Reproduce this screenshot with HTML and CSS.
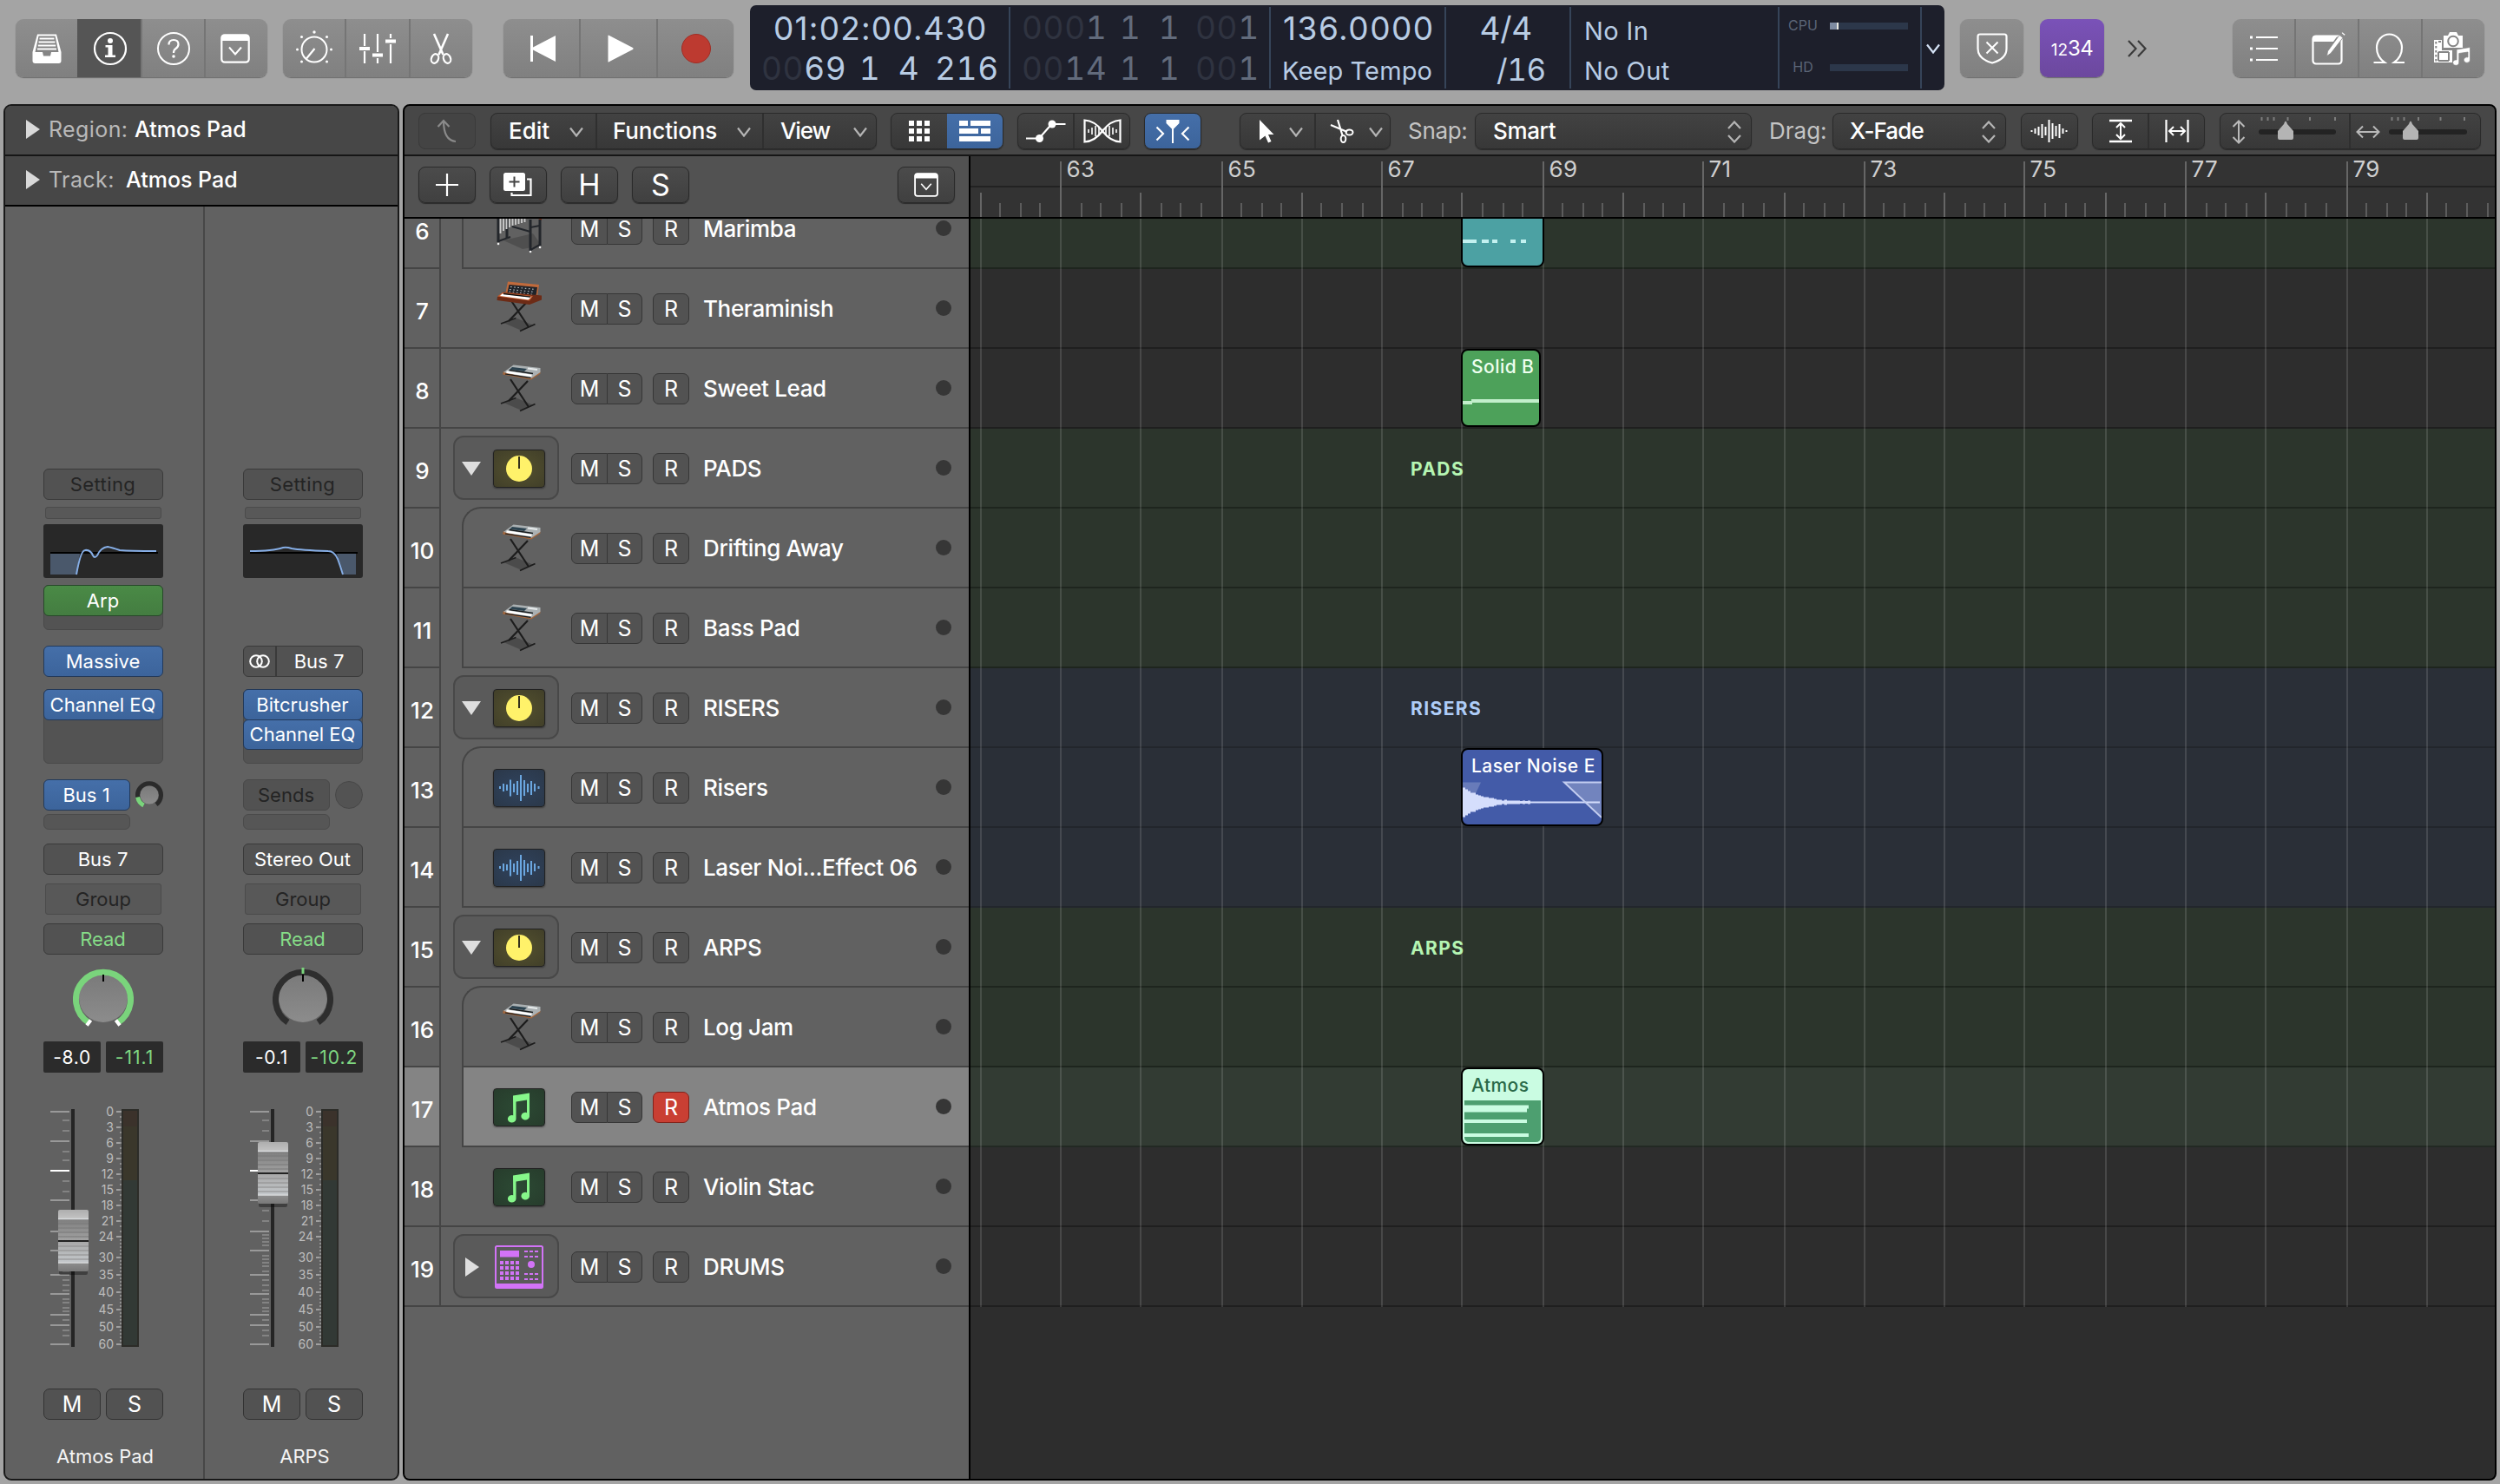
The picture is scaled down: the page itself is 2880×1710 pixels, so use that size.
FILE: index.html
```html
<!DOCTYPE html>
<html lang="en">
<head>
<meta charset="utf-8">
<title>Tracks</title>
<link rel="stylesheet" href="styles.css">
</head>
<body>
<svg width="0" height="0" class="defs" aria-hidden="true">
  <symbol id="chev" viewBox="0 0 16 12"><path d="M1 1.5 8 10.5 15 1.5" fill="none" stroke="currentColor" stroke-width="2.2"/></symbol>
  <symbol id="updown" viewBox="0 0 18 26"><path d="M2 9 9 1.500 16 9M2 17 9 24.500 16 17" fill="none" stroke="currentColor" stroke-width="2.200"/></symbol>
  <symbol id="window" viewBox="0 0 34 34"><rect x="1.300" y="1.300" width="31.400" height="31.400" rx="3.500" fill="none" stroke="currentColor" stroke-width="2.200"/><path d="M1 8V4Q1 1 4 1H30Q33 1 33 4V8Z" fill="currentColor"/><path d="M10 15.500 17 23.500 24 15.500" fill="none" stroke="currentColor" stroke-width="2"/></symbol>
  <symbol id="stereo" viewBox="0 0 24 16"><circle cx="8" cy="8" r="6.800" fill="none" stroke="currentColor" stroke-width="2"/><circle cx="16" cy="8" r="6.800" fill="none" stroke="currentColor" stroke-width="2"/></symbol>
  <linearGradient id="knobface" x1="0" y1="0" x2="0" y2="1"><stop offset="0" stop-color="#7a7a7a"/><stop offset="1" stop-color="#8c8c8c"/></linearGradient>
  <symbol id="marimba" viewBox="0 0 60 92">
    <path d="M12 60 46 52 56 66 34 70Z" fill="#000" opacity=".18"/>
    <path d="M4 20 50 34 56 37 56 30 4 18Z" fill="#7a3420"/>
    <path d="M6 30V62M16 35V57M43 36V72M54 36V66" stroke="#23262b" stroke-width="3"/>
    <path d="M6 61 20 56M43 45 54 43M43 71 54 65M22 44 43 50" stroke="#23262b" stroke-width="2"/>
    <path d="M8.500 30V52M12 30V49M15.500 30V47M19 31V45M22.500 31V43M26 32V42M29.500 32V41M33 33V40M36.500 33V39" stroke="#c9c9c9" stroke-width="1.900"/>
    <path d="M6 64h.1M43 73h.1M54 68h.1" stroke="#eee" stroke-width="2.500" stroke-linecap="round"/>
  </symbol>
  <symbol id="stand" viewBox="0 0 60 92">
    <path d="M12 63 28 58 47 66 33 72Z" fill="#000" opacity=".22"/>
    <path d="M20 36 41 68M40 38 18 61" stroke="#1c1c1c" stroke-width="2.200"/>
    <path d="M9 64 26.500 57.500M31 72.500 48.500 64.500" stroke="#1c1c1c" stroke-width="1.800"/>
  </symbol>
  <symbol id="modular" viewBox="0 0 60 92">
    <use href="#stand" width="60" height="92"/>
    <path d="M17 15.500 53 19 51 32.500 14.500 28Z" fill="#c06a3c"/>
    <path d="M18.500 19 51 22 49.500 32 16.500 28Z" fill="#20242a"/>
    <path d="M20 21.500 49 24.500M19 24.500 48 27.500M18.500 27 47 30.500" stroke="#b9c0c4" stroke-width="1.100" stroke-dasharray="1.600 2.600"/>
    <path d="M5 33 12 27.500 56 31.500 56 36.500 42 42 4.500 37Z" fill="#6d2b16"/>
    <path d="M5 32.500 11 28 46 32 42 37.500Z" fill="#c45f31"/>
    <path d="M10.500 29.500 44 33.500 40.500 36.500 8 32Z" fill="#fff"/>
    <path d="M12 29.500 43 33.200" stroke="#111" stroke-width="1.300"/>
  </symbol>
  <symbol id="synth" viewBox="0 0 60 92">
    <use href="#stand" width="60" height="92"/>
    <path d="M12 27 44 33 54 25 54.500 29.500 44 36.500 11 30.500Z" fill="#a4653a"/>
    <path d="M23.500 19.500 54.500 23 54.500 28 44 35 12 28Z" fill="#aab0b2"/>
    <path d="M22 22 39 24 36 27 19 24.800Z" fill="#2c4350"/>
    <path d="M40 23.500 51 25" stroke="#e8eced" stroke-width="2"/>
    <path d="M18.500 25.500 46 29.500" stroke="#16191b" stroke-width="1.500"/>
    <path d="M15.500 27.600 44.500 32" stroke="#fff" stroke-width="2.600"/>
    <path d="M14 30 43.500 34.400" stroke="#15181a" stroke-width="1.200"/>
  </symbol>
  <symbol id="bus" viewBox="0 0 60 44">
    <circle cx="30" cy="22" r="15" fill="#fff26a"/><path d="M30 8V22" stroke="#33301a" stroke-width="2"/>
  </symbol>
  <symbol id="audio" viewBox="0 0 60 44">
    <path d="M8 20v3M12 17v9M16 18v7M20 12.500v19M24 17v10M28 14v16M32 7v30M36 13v18M40 17v10M44 14v16M48 17v9M52.500 20v3" stroke="#6ba7e0" stroke-width="2"/>
  </symbol>
  <symbol id="notes" viewBox="0 0 60 44">
    <path d="M23 8.500 42 5.500V32.500a4.800 4.300 0 1 1-3-4.300V13.500L26.500 15.500V35.500a4.800 4.300 0 1 1-3.300-4.300Z" fill="#86f78a"/>
  </symbol>
  <symbol id="drums" viewBox="0 0 56 50">
    <rect x="1" y="1" width="54" height="48" rx="1.500" fill="none" stroke="#d273f7" stroke-width="2"/>
    <path d="M1 44H55V48.500H1ZM6 6H28V13.500H6Z" fill="#d273f7"/>
    <path d="M6 20H28M6 26H28M6 32H28M6 38H28" stroke="#d273f7" stroke-width="4" stroke-dasharray="4 2"/>
    <path d="M34 7H50M34 13H50M34 33H50M34 39H50" stroke="#d273f7" stroke-width="2" stroke-dasharray="4 2"/>
    <circle cx="42" cy="22" r="4" fill="#d273f7"/>
  </symbol>
</svg>

<header class="topbar">
  <div class="tgroup g4">
    <button class="tb"><svg width="36" height="36" viewBox="0 0 36 36"><path d="M7 1.500H29L34.500 22V32Q34.500 35 31.500 35H4.500Q1.500 35 1.500 32V22Z" fill="#fff"/><path d="M8.500 3.500H27.500L31.500 22H23L22 26.500H14L13 22H4.500Z" fill="#858585"/><path d="M9.500 6.500H26.500M8.500 10.500H27.500M7.800 14.500H28.200M7 18.500H29" stroke="#fff" stroke-width="2.200"/></svg></button>
    <button class="tb on"><svg width="40" height="40" viewBox="0 0 40 40"><circle cx="20" cy="20" r="18" fill="none" stroke="#fff" stroke-width="2.200"/><circle cx="20" cy="11" r="3" fill="#fff"/><path d="M14.500 16H22.500V27.500H26V30H14V27.500H17.500V18.500H14.500Z" fill="#fff"/></svg></button>
    <button class="tb"><svg width="40" height="40" viewBox="0 0 40 40"><circle cx="20" cy="20" r="18" fill="none" stroke="#fff" stroke-width="2"/><path d="M14.500 15.500Q14.500 10 20 10T25.500 15Q25.500 18 22.500 20Q20 21.500 20 25" fill="none" stroke="#fff" stroke-width="2.200"/><circle cx="20" cy="29" r="1.800" fill="#fff"/></svg></button>
    <button class="tb nl"><svg width="34" height="34"><use href="#window"/></svg></button>
  </div>
  <div class="tgroup g3">
    <button class="tb"><svg width="46" height="46" viewBox="0 0 46 46"><circle cx="23" cy="24" r="14.500" fill="none" stroke="#fff" stroke-width="2"/><path d="M14 34.500 23.500 23" stroke="#fff" stroke-width="2.200"/><g fill="#fff"><circle cx="23" cy="4" r="1.700"/><circle cx="8.500" cy="9.500" r="1.500"/><circle cx="37.500" cy="9.500" r="1.500"/><circle cx="3.500" cy="24" r="1.500"/><circle cx="42.500" cy="24" r="1.500"/><circle cx="8.500" cy="38" r="1.500"/><circle cx="37.500" cy="38" r="1.500"/></g></svg></button>
    <button class="tb"><svg width="42" height="36" viewBox="0 0 42 36"><path d="M6 1V15M6 21V35M21 1V22M21 29V35M36 1V6M36 13V35" stroke="#fff" stroke-width="2.200"/><path d="M0 16h12v4H0ZM15 23.500h12v4H15ZM30 7.500h12v4H30Z" fill="#fff"/></svg></button>
    <button class="tb"><svg width="28" height="38" viewBox="0 0 28 38"><path d="M6 2 16.500 26M22 2 11.500 26" fill="none" stroke="#fff" stroke-width="2.600"/><ellipse cx="7" cy="30.500" rx="4" ry="5.500" transform="rotate(22 7 30.500)" fill="none" stroke="#fff" stroke-width="2.200"/><ellipse cx="21" cy="30.500" rx="4" ry="5.500" transform="rotate(-22 21 30.500)" fill="none" stroke="#fff" stroke-width="2.200"/></svg></button>
  </div>
  <div class="tgroup transport">
    <button class="tb nr"><svg width="32" height="32" viewBox="0 0 32 32"><path d="M1 1H4V14.500L30 1V31L4 17.500V31H1Z" fill="#fff"/></svg></button>
    <button class="tb nr"><svg width="32" height="32" viewBox="0 0 32 32"><path d="M1.500 1Q1.500 0 3 1L30 15Q31.500 16 30 17L3 31Q1.500 32 1.500 31Z" fill="#fff"/></svg></button>
    <button class="tb"><span class="rec"></span></button>
  </div>
  <div class="lcd">
    <div class="lcell pos">
      <div class="big time">01:02:00.430</div>
      <div class="big bars"><span><i>00</i>69</span><span>1</span><span>4</span><span>216</span></div>
    </div>
    <div class="lcell loc">
      <div class="big bars"><span><i>000</i>1</span><span>1</span><span>1</span><span><i>00</i>1</span></div>
      <div class="big bars"><span><i>00</i>14</span><span>1</span><span>1</span><span><i>00</i>1</span></div>
    </div>
    <div class="lcell tempo"><div class="big">136.0000</div><div class="mid">Keep Tempo</div></div>
    <div class="lcell sig"><div class="big">4/4</div><div class="big low">/16</div></div>
    <div class="lcell io"><div class="mid">No In</div><div class="mid">No Out</div></div>
    <div class="lcell perf">
      <div class="meter"><span>CPU</span><b class="mbar"><i></i></b></div>
      <div class="meter"><span>HD</span><b class="mbar"></b></div>
    </div>
    <div class="lcell more"><svg width="16" height="12" ><use href="#chev"/></svg></div>
  </div>
  <button class="tb solo shield"><svg width="36" height="36" viewBox="0 0 36 36"><path d="M4 1.500H32Q34.500 1.500 34.500 4V18Q34.500 30 18 34.500Q1.500 30 1.500 18V4Q1.500 1.500 4 1.500Z" fill="none" stroke="#fff" stroke-width="2.200"/><path d="M11.500 10.500 24.500 23.500M24.500 10.500 11.500 23.500" stroke="#fff" stroke-width="2"/></svg></button>
  <button class="tb solo count"><small>12</small>34</button>
  <svg class="dbl" width="24" height="20" viewBox="0 0 24 20"><path d="M2 1 10.500 10 2 19M13 1 21.500 10 13 19" fill="none" stroke="#3a3a3a" stroke-width="2.200"/></svg>
  <div class="tgroup g4 right">
    <button class="tb"><svg width="34" height="32" viewBox="0 0 34 32"><path d="M8 3H33M8 16H33M8 29H33" stroke="#fff" stroke-width="2.200"/><path d="M1 1.500h3v3H1ZM1 14.500h3v3H1ZM1 27.500h3v3H1Z" fill="#fff"/></svg></button>
    <button class="tb nr"><svg width="40" height="38" viewBox="0 0 40 38"><rect x="1.500" y="4.500" width="33" height="32" rx="3.500" fill="none" stroke="#fff" stroke-width="2.200"/><path d="M1 11V7Q1 4 4 4H30L25 11Z" fill="#fff"/><path d="M32 3.500 36 6.500 22 24.500 17.500 27.500 18.500 22ZM34 1 35.500 0 39 2.500 38 4.500Z" fill="#fff" stroke="#858585" stroke-width=".8"/></svg></button>
    <button class="tb nl"><svg width="38" height="36" viewBox="0 0 38 36"><path d="M1.500 34H14Q5 27.500 5 17A14.500 15.500 0 0 1 34 17Q34 27.500 25 34H37" fill="none" stroke="#fff" stroke-width="2.200"/></svg></button>
    <button class="tb nl"><svg width="44" height="40" viewBox="0 0 44 40"><path d="M12 5H17L19 1H27L29 5H34V19H12Z" fill="#fff"/><circle cx="23" cy="11.500" r="5.800" fill="#fff" stroke="#858585" stroke-width="2"/><path d="M1 10H10V22H22V36H1Z" fill="#fff"/><path d="M6 12H9M6 24H18M6 34H18M6 24V34M18 24V34" stroke="#858585" stroke-width="2" fill="none"/><path d="M3.300 12V35" stroke="#858585" stroke-width="2" stroke-dasharray="2.500 2.500"/><path d="M27 21 42.500 18.500V33a3.600 3.200 0 1 1-2.500-3V24L29.800 25.500V36a3.600 3.200 0 1 1-2.800-3Z" fill="#fff" stroke="#858585" stroke-width=".7"/></svg></button>
  </div>
</header>

<div class="work">
  <aside class="inspector">
    <div class="irow"><i class="tri"></i><span class="lbl">Region:</span><span>Atmos Pad</span></div>
    <div class="irow trk"><i class="tri"></i><span class="lbl">Track:</span><span>Atmos Pad</span></div>
    <div class="strips">
      <section class="strip">
        <div class="slot dim">Setting</div>
        <div class="thin"></div>
        <svg class="eq" width="138" height="62" viewBox="0 0 138 62"><path d="M8 33H132" stroke="#000" stroke-width="2"/><path d="M8 34H42L38 58H8Z" fill="#4a586b"/><path d="M38 58Q43 30 48 30Q54 29 57 36Q59 40 62 36Q66 27 74 26Q79 27 88 30Q100 31 130 31" fill="none" stroke="#86aee6" stroke-width="2"/></svg>
        <div class="well midi"><div class="slot green">Arp</div></div>
        <div class="slot blue inst">Massive</div>
        <div class="well fx"><div class="slot blue">Channel EQ</div></div>
        <div class="sends"><div class="slot blue">Bus 1</div>
          <svg width="32" height="32" viewBox="0 0 32 32"><circle cx="16" cy="16" r="10.500" fill="url(#knobface)"/><path d="M8 27A13.500 13.500 0 1 1 24 27" fill="none" stroke="#2b2b2b" stroke-width="5"/><path d="M9.500 28A13.500 13.500 0 0 1 2.600 18.500" fill="none" stroke="#7ad47c" stroke-width="5"/></svg></div>
        <div class="thin send2"></div>
        <div class="slot out">Bus 7</div>
        <div class="thin group">Group</div>
        <div class="slot read">Read</div>
        <svg class="pan" width="70" height="70" viewBox="0 0 70 70"><circle cx="35" cy="35" r="28" fill="url(#knobface)"/><path d="M18.500 63.500A31.500 31.500 0 1 1 51.500 63.500" fill="none" stroke="#7ad47c" stroke-width="7"/><path d="M16 66.500 20.500 60.500M54 66.500 49.500 60.500" stroke="#fff" stroke-width="4"/><path d="M35 8V16" stroke="#000" stroke-width="2"/></svg>
        <div class="vals"><span>-8.0</span><span class="gr">-11.1</span></div>
        <svg class="fader" data-cap="116" width="138" height="286" viewBox="0 0 138 286"></svg>
        <div class="ms"><span>M</span><span>S</span></div>
        <div class="sname">Atmos Pad</div>
      </section>
      <section class="strip">
        <div class="slot dim">Setting</div>
        <div class="thin"></div>
        <svg class="eq" width="138" height="62" viewBox="0 0 138 62"><path d="M8 33H132" stroke="#000" stroke-width="2"/><path d="M108 34H130V58H115Z" fill="#4a586b"/><path d="M8 31Q34 31 46 27Q50 26 56 28Q66 30 98 31Q105 31 109 40Q112 48 115 58" fill="none" stroke="#86aee6" stroke-width="2"/></svg>
        <div class="well midi none"></div>
        <div class="slot inst input"><svg width="24" height="16"><use href="#stereo"/></svg><span>Bus 7</span></div>
        <div class="well fx"><div class="slot blue">Bitcrusher</div><div class="slot blue second">Channel EQ</div></div>
        <div class="sends"><div class="slot dim">Sends</div><i class="emptyknob"></i></div>
        <div class="thin send2"></div>
        <div class="slot out">Stereo Out</div>
        <div class="thin group">Group</div>
        <div class="slot read">Read</div>
        <svg class="pan" width="70" height="70" viewBox="0 0 70 70"><circle cx="35" cy="35" r="28" fill="url(#knobface)"/><path d="M17.500 63A31.500 31.500 0 1 1 52.500 63" fill="none" stroke="#2e2e2e" stroke-width="7"/><path d="M35 0V7" stroke="#7ad47c" stroke-width="3"/><path d="M35 8V16" stroke="#000" stroke-width="2"/></svg>
        <div class="vals"><span>-0.1</span><span class="gr">-10.2</span></div>
        <svg class="fader" data-cap="38" width="138" height="286" viewBox="0 0 138 286"></svg>
        <div class="ms"><span>M</span><span>S</span></div>
        <div class="sname">ARPS</div>
      </section>
    </div>
  </aside>

  <main class="tracks">
    <div class="menubar">
      <div class="mg back"><svg width="24" height="28" viewBox="0 0 24 28"><path d="M22 26Q8 25 8 2M1.500 9 8 2 14.500 9" fill="none" stroke="#8a8a8a" stroke-width="2.200"/></svg></div>
      <div class="mg menus">
        <span class="m1">Edit<svg width="16" height="12"><use href="#chev"/></svg></span>
        <span class="m2">Functions<svg width="16" height="12"><use href="#chev"/></svg></span>
        <span class="m3">View<svg width="16" height="12"><use href="#chev"/></svg></span>
      </div>
      <div class="mg view">
        <span><svg width="24" height="24" viewBox="0 0 24 24"><path d="M0 3H24M0 12H24M0 21H24" stroke="#fff" stroke-width="6" stroke-dasharray="6 3"/></svg></span>
        <span class="sel"><svg width="36" height="24" viewBox="0 0 36 24"><path d="M0 0h10v6H0ZM13 0h23v6H13ZM0 9h22v6H0ZM25 9h11v6H25ZM0 18h36v6H0Z" fill="#fff"/></svg></span>
      </div>
      <div class="mg auto">
        <span><svg width="46" height="28" viewBox="0 0 46 28"><path d="M0 22.500H15L29.500 6M34 6H45.500" fill="none" stroke="#fff" stroke-width="2.200"/><circle cx="15.500" cy="22.500" r="4.500" fill="#fff"/><circle cx="30" cy="6" r="4.500" fill="#fff"/></svg></span>
        <span><svg width="44" height="28" viewBox="0 0 44 28"><path d="M1.500 1.500Q13 2 22 14T42.500 26.500V1.500Q31 2 22 14T1.500 26.500Z" fill="none" stroke="#fff" stroke-width="2.200"/><path d="M6 12v4M10 10v8M14 8v12M18 10v8M26 10v8M30 8v12M34 10v8M38 12v4" stroke="#fff" stroke-width="1.600"/></svg></span>
      </div>
      <div class="mg catch sel"><svg width="40" height="28" viewBox="0 0 40 28"><path d="M12.500 1H27.500V5L21 11.500V28H19V11.500L12.500 5Z" fill="#fff"/><path d="M1.500 9.500 9 17 1.500 24.500M38.500 9.500 31 17 38.500 24.500" fill="none" stroke="#fff" stroke-width="2.200"/></svg></div>
      <div class="mg tools">
        <span><svg width="18" height="28" viewBox="0 0 18 28"><path d="M1 1 17.500 18H11L14.500 26 11 27.500 7.500 19.500 1 24.500Z" fill="#fff"/></svg><svg width="16" height="12" class="c"><use href="#chev"/></svg></span>
        <span><svg width="28" height="28" viewBox="0 0 28 28"><path d="M9 1 14.500 19M1 7 20 15" fill="none" stroke="#fff" stroke-width="2.200"/><ellipse cx="22.500" cy="15.500" rx="4" ry="3" fill="none" stroke="#fff" stroke-width="2"/><ellipse cx="15.500" cy="23" rx="2.800" ry="4" fill="none" stroke="#fff" stroke-width="2"/></svg><svg width="16" height="12" class="c"><use href="#chev"/></svg></span>
      </div>
      <label class="snap">Snap:</label>
      <div class="mg select s1">Smart<svg width="18" height="26"><use href="#updown"/></svg></div>
      <label class="drag">Drag:</label>
      <div class="mg select s2">X-Fade<svg width="18" height="26"><use href="#updown"/></svg></div>
      <div class="mg wave"><svg width="44" height="28" viewBox="0 0 44 28"><path d="M1.500 13v2M5.500 11v6M9.500 9v10M13.500 6v16M17.500 9v10M21.500 1v26M25.500 5v18M29.500 8v12M33.500 6v16M37.500 11v6M41.500 13v2" stroke="#fff" stroke-width="2"/></svg></div>
      <div class="mg zoomfit">
        <span><svg width="28" height="28" viewBox="0 0 28 28"><path d="M1 2H27M1 26H27" stroke="#fff" stroke-width="2.400"/><path d="M14 5V23M9 10 14 5 19 10M9 18 14 23 19 18" fill="none" stroke="#fff" stroke-width="2"/></svg></span>
        <span><svg width="28" height="28" viewBox="0 0 28 28"><path d="M1.500 1V27M26.500 1V27" stroke="#fff" stroke-width="2.200"/><path d="M5 14H23M10 9 5 14 10 19M18 9 23 14 18 19" fill="none" stroke="#fff" stroke-width="2"/></svg></span>
      </div>
      <div class="mg zooms">
        <span><svg width="148" height="38" viewBox="0 0 148 38"><path d="M21 9V31M14.500 14 21 7.500 27.500 14M14.500 26 21 32.500 27.500 26" fill="none" stroke="#b9b9b9" stroke-width="2"/><path d="M47.500 3v4M54.500 3v4M61.500 3v4M77.500 3v4M103 3v4M132 3v4" stroke="#7d7d7d" stroke-width="2"/><rect x="44" y="17" width="89" height="6" rx="3" fill="#232323"/><path d="M75 7.500Q76 7.500 77 11L84 19V27Q84 29 82 29H68Q66 29 66 27V19L73 11Q74 7.500 75 7.500Z" fill="#b4b4b4"/></svg></span>
        <span><svg width="150" height="38" viewBox="0 0 150 38"><path d="M8 20H32M14 13.500 7.500 20 14 26.500M26 13.500 32.500 20 26 26.500" fill="none" stroke="#b9b9b9" stroke-width="2"/><path d="M47.500 3v4M54.500 3v4M61.500 3v4M78 3v4M103.500 3v4M131 3v4" stroke="#7d7d7d" stroke-width="2"/><rect x="44" y="17" width="90" height="6" rx="3" fill="#232323"/><path d="M69 7.500Q70 7.500 71 11L78 19V27Q78 29 76 29H62Q60 29 60 27V19L67 11Q68 7.500 69 7.500Z" fill="#b4b4b4"/></svg></span>
      </div>
    </div>
    <div class="area">
      <div class="heads">
        <div class="headbar">
          <div class="mg hb"><svg width="26" height="26" viewBox="0 0 26 26"><path d="M13 0V26M0 13H26" stroke="#fff" stroke-width="2.200"/></svg></div>
          <div class="mg hb"><svg width="34" height="28" viewBox="0 0 34 28"><rect x="0" y="0" width="25" height="21" rx="2.500" fill="#fff"/><path d="M12.500 4.500V16.500M6.500 10.500H18.500" stroke="#444" stroke-width="2"/><path d="M27 7.500H31.500V26H9.500V23" fill="none" stroke="#fff" stroke-width="2.200"/></svg></div>
          <div class="mg hb ltr">H</div>
          <div class="mg hb ltr">S</div>
          <div class="mg hb last"><svg width="28" height="28"><use href="#window"/></svg></div>
        </div>
        <div class="clip"><div class="list" id="heads"></div></div>
      </div>
      <div class="timeline">
        <div class="ruler"><svg id="ruler" width="1756" height="70" viewBox="0 0 1756 70"></svg></div>
        <div class="clip"><div class="list" id="lanes"></div></div>
      </div>
    </div>
  </main>
</div>
<script src="app.js"></script>
</body>
</html>
```
FILE: styles.css
```css
* { box-sizing: border-box; }
html, body { margin: 0; }
body { width: 2880px; height: 1710px; overflow: hidden; background: #a4a4a4; font-family: Inter, "Liberation Sans", sans-serif; font-size: 26px; color: #fff; display: flex; flex-direction: column; }
button { font: inherit; color: inherit; border: 0; padding: 0; }
i, b { font-style: normal; font-weight: inherit; }
svg { display: block; flex: none; }
.defs { position: absolute; }

/* control bar */
.topbar { height: 120px; flex: none; padding: 22px 18px 0; display: flex; align-items: flex-start; }
.tgroup { display: flex; height: 67px; border-radius: 9px; overflow: hidden; box-shadow: 0 1px 1px #6c6c6c; }
.tb { display: flex; align-items: center; justify-content: center; height: 67px; background: linear-gradient(#8e8e8e, #808080); }
.tgroup .tb { flex: 1 1 0; border-left: 2px solid #757575; }
.tgroup .tb:first-child { border-left: 0; }
.tgroup .tb.on { background: #555; border-color: #555; }
.tb.nl svg { margin-right: 4px; }
.tb.nr svg { margin-left: 4px; }
.g4 { width: 290px; }
.g3 { width: 218px; margin-left: 18px; }
.transport { width: 265px; margin-left: 36px; }
.rec { width: 34px; height: 34px; border-radius: 50%; background: #bd3a30; border: 1px solid #a02e25; }
.lcd { margin: -16px 0 0 19px; width: 1376px; height: 98px; border-radius: 7px; background: #1d1f2b; color: #b8cce4; display: flex; padding: 2px 0; }
.lcell { border-left: 2px solid #364459; padding-top: 1px; }
.lcell:first-child { border-left: 0; }
.big { font-size: 37px; line-height: 46px; height: 46px; white-space: nowrap; font-variant-numeric: tabular-nums; }
.mid { font-size: 29px; line-height: 46px; height: 46px; white-space: nowrap; letter-spacing: .1px; }
.pos { width: 298px; }
.loc { width: 300px; color: #626b7c; }
.tempo { width: 202px; padding-left: 14px; }
.sig { width: 144px; }
.io { width: 240px; padding-left: 15px; letter-spacing: .3px; }
.perf { width: 164px; padding: 16px 0 0 9px; }
.more { flex: 1; display: flex; align-items: center; justify-content: center; color: #d4e2f5; }
.time { padding-left: 27px; padding-top: 1px; font-variant-numeric: normal; letter-spacing: 1.2px; }
.bars { display: grid; grid-template-columns: 98px 54px 36px 1fr; padding-left: 13px; letter-spacing: .6px; }
.bars i { color: #2f3340; }
.bars span:nth-child(2), .bars span:nth-child(3) { text-align: center; }
.bars span:nth-child(4) { padding-left: 12px; }
.lcd .big + .big, .lcd .big + .mid { margin-top: 1px; }
.tempo .big { letter-spacing: 1.5px; font-variant-numeric: normal; padding-top: 1px; }
.tempo .mid { padding-top: 3px; margin-left: -1px; }
.sig .big { text-align: right; padding-right: 43px; letter-spacing: -.3px; padding-top: 1px; }
.sig .big.low { padding-right: 27px; font-size: 35px; }
.io .mid { padding-top: 4px; letter-spacing: .4px; }
.meter { display: flex; align-items: center; height: 12px; margin-bottom: 36px; font-size: 16px; color: #5b6577; }
.meter span { width: 49px; text-align: center; margin-left: -9px; padding-left: 5px; margin-top: -2px; }
.mbar { width: 90px; height: 8px; background: #2c374a; margin-left: 9px; }
.mbar i { display: block; width: 10px; height: 8px; background: #7d8aa0; border-right: 2px solid #e8e8e0; }
.solo { border-radius: 9px; box-shadow: 0 1px 1px #6c6c6c; }
.shield { width: 73px; margin-left: 18px; }
.count { width: 74px; margin-left: 19px; background: linear-gradient(#7a52b8, #6c489e); font-size: 24px; letter-spacing: -.6px; line-height: 67px; }
.count small { font-size: 19px; line-height: 67px; padding-top: 3px; letter-spacing: 0; }
.dbl { margin: 24px 0 0 26px; }
.right { margin-left: auto; }

.work { display: flex; height: 1586px; padding-left: 4px; gap: 4px; }

/* inspector */
.inspector { width: 456px; border: 2px solid #191919; border-radius: 9px; overflow: hidden; background: #616161; display: flex; flex-direction: column; }
.irow { height: 58px; border-bottom: 2px solid #161616; background: #474747; padding-left: 24px; display: flex; align-items: center; font-size: 25px; font-weight: 500; line-height: 54px; padding-bottom: 2px; }
.irow.trk { border-bottom-color: #000; }
.irow .lbl { color: #b9b9b9; width: 109px; padding-left: 10px; letter-spacing: .4px; white-space: nowrap; font-weight: 400; }
.irow.trk .lbl { width: 99px; }
.tri { width: 0; height: 0; border-left: 16px solid #d9d9d9; border-top: 11px solid transparent; border-bottom: 11px solid transparent; }
.strips { display: flex; flex: 1; }
.strip { width: 228px; padding: 302px 0 0 44px; font-size: 22px; line-height: 34px; }
.strip + .strip { width: 224px; border-left: 2px solid #474747; }
.slot { width: 138px; height: 36px; border: 1.5px solid #3a3a3a; border-radius: 6px; background: #525252; text-align: center; white-space: nowrap; padding-right: 1px; }
.dim { color: #242424; letter-spacing: .4px; }
.thin { width: 134px; margin: 8px 0 0 2px; height: 14px; background: #585858; border: 1px solid #4b4b4b; border-radius: 3px; }
.eq { margin-top: 6px; background: #282828; border-radius: 3px; }
.well { width: 138px; background: #535353; border: 1px solid #494949; border-radius: 6px; }
.well .slot { margin: -1px; line-height: 35px; }
.midi { margin-top: 8px; height: 52px; }
.midi.none { background: none; border-color: transparent; }
.blue { background: linear-gradient(#456fa9, #3c649b); border-color: #22395a; }
.green { background: linear-gradient(#4a8a46, #447d41); border-color: #27482a; }
.inst { margin-top: 18px; }
.fx { margin-top: 14px; height: 86px; }
.well .second { margin-top: 0; height: 35px; line-height: 32px; }
.input { display: flex; align-items: center; }
.input svg { margin: 0 6px; }
.input span { flex: 1; border-left: 2px solid #3a3a3a; text-align: center; }
.sends { margin-top: 18px; display: flex; justify-content: space-between; width: 138px; align-items: center; }
.sends .slot { width: 100px; }
.sends .dim { border-color: #484848; letter-spacing: 0; }
.emptyknob { width: 32px; height: 32px; border-radius: 50%; background: #535353; border: 1px solid #484848; }
.send2 { width: 100px; height: 18px; margin: 4px 0 0; border-radius: 6px; background: #565656; }
.out { margin-top: 16px; }
.group { height: 36px; margin-top: 10px; text-align: center; color: #242424; line-height: 35px; }
.read { margin-top: 10px; color: #85dc87; line-height: 35px; }
.pan { margin: 15px 0 0 34px; }
.vals { display: flex; gap: 6px; margin-top: 15px; font-size: 21px; line-height: 37px; }
.vals span { width: 66px; height: 36px; background: #2b2b2b; border-radius: 2px; text-align: center; letter-spacing: .7px; }
.vals .gr { color: #7fd681; letter-spacing: 1px; }
.fader { margin-top: 42px; font-size: 14px; overflow: visible; }
.ms { display: flex; gap: 6px; margin-top: 36px; font-size: 25px; line-height: 34px; }
.ms span { width: 66px; height: 36px; border: 1.5px solid #333; border-radius: 7px; background: #525252; text-align: center; }
.sname { width: 138px; margin: 25px 0 0 2px; text-align: center; line-height: 34px; color: #f4f4f4; white-space: nowrap; }

/* tracks area */
.tracks { width: 2412px; border: 2px solid #000; border-radius: 8px; overflow: hidden; background: #2d2d2d; }
.menubar { height: 58px; background: #474747; border-bottom: 2px solid #161616; display: flex; padding: 8px 0 0 16px; font-weight: 500; }
.mg { height: 42px; border: 1px solid #2a2a2a; border-radius: 8px; background: linear-gradient(#424242, #383838); box-shadow: 0 1px 1px #2b2b2b; display: flex; align-items: center; justify-content: center; overflow: hidden; }
.mg > span { display: flex; align-items: center; justify-content: center; height: 42px; border-left: 2px solid #2f2f2f; }
.mg > span:first-child { border-left: 0; }
.back { width: 66px; background: #444; border-color: #3a3a3a; box-shadow: none; }
.menus { width: 445px; margin-left: 17px; color: #fff; }
.menus > span { justify-content: flex-start; line-height: 40px; }
.menus svg, .tools .c, .select svg { color: #b4b4b4; margin-top: 2px; }
.m1 { width: 120px; padding-left: 20px; }
.m1 svg { margin-left: 23px; }
.m2 { width: 192px; padding-left: 18px; letter-spacing: -.15px; }
.m2 svg { margin-left: 23px; }
.m3 { flex: 1; padding-left: 19px; letter-spacing: -1.1px; }
.m3 svg { margin-left: 27px; }
.view { width: 130px; margin-left: 16px; }
.view > span { flex: 1; }
.view > .sel { border-left: 0; }
.view .sel, .catch.sel { background: linear-gradient(#456fa9, #3c649b); }
.auto { width: 130px; margin-left: 16px; }
.auto > span { flex: 1; }
.catch { width: 66px; margin-left: 16px; }
.tools { width: 174px; margin-left: 44px; }
.tools > span { flex: 1; gap: 17px; padding-left: 7px; }
.menubar label { color: #c4c4c4; font-weight: 400; line-height: 41px; white-space: nowrap; }
.snap { width: 75px; margin-left: 20px; letter-spacing: -.3px; }
.drag { width: 73px; margin-left: 20px; }
.select { justify-content: space-between; line-height: 40px; }
.s1 { width: 319px; padding: 0 10px 0 20px; letter-spacing: -.35px; margin-left: 2px; }
.s2 { width: 200px; padding: 0 10px 0 19px; letter-spacing: -.9px; }
.wave { width: 66px; margin-left: 17px; }
.zoomfit { width: 130px; margin-left: 16px; }
.zoomfit > span { flex: 1; }
.zooms { width: 301px; margin-left: 17px; justify-content: flex-start; }
.area { display: flex; height: 1524px; }
.heads { width: 652px; border-right: 2px solid #000; background: #616161; }
.headbar { height: 72px; background: #525252; border-bottom: 2px solid #000; padding: 12px 16px 0; display: flex; gap: 16px; }
.hb { width: 66px; background: linear-gradient(#4b4b4b, #404040); }
.ltr { font-size: 34px; line-height: 40px; }
.last { margin-left: auto; }
.clip { overflow: hidden; height: 1452px; }
.list { margin-top: -34px; position: relative; }
.row { display: flex; height: 92px; }
.num { width: 40px; border-bottom: 2px solid #454545; text-align: center; line-height: 97px; font-weight: 500; padding-left: 1px; }
.rule { width: 2px; background: #454545; }
.body { flex: 1; display: flex; align-items: center; padding: 2px 0 0 60px; border-bottom: 2px solid #454545; }
.row.open .body { border-bottom-color: transparent; }
.row.folder .body { padding-left: 14px; }
.row.child .body { margin-left: 24px; border-left: 2px solid #454545; padding-left: 34px; }
.row.first .body { margin-top: -2px; border-top: 2px solid #454545; border-top-left-radius: 22px; }
.row.picked .num, .row.picked .body { background: #848484; }
.fold { width: 122px; height: 74px; border: 2px solid #484848; border-radius: 12px; display: flex; align-items: center; padding: 2px 0 0 8px; margin: -2px 14px 0 0; background: #5a5a5a; }
.fold .arrow { width: 22px; margin-right: 14px; }
.box { width: 60px; height: 44px; border-radius: 4px; border: 1px solid #222; box-shadow: 0 1px 2px rgba(0, 0, 0, .4); flex: none; }
.box svg { margin: -1px; }
.box.bus { background: radial-gradient(#55522f, #413f29); }
.box.audio { background: radial-gradient(#30435e, #2b3849); }
.box.notes { background: radial-gradient(#2c4a34, #273c2c); }
.pic { width: 60px; height: 92px; }
.art .pic { margin-top: -2px; }
.pads { margin-left: 2px; }
.art { margin-right: 30px; flex: none; }
.msr { display: flex; height: 36px; font-size: 25px; line-height: 34px; }
.msr span { border: 1.5px solid #363636; background: #525252; text-align: center; }
.msr .m { width: 42px; border-radius: 7px 0 0 7px; }
.msr .s { width: 40px; border-left: 0; border-radius: 0 7px 7px 0; }
.msr .r { width: 42px; border-radius: 7px; margin-left: 12px; }
.msr .r.armed { background: #c93f33; border-color: #7f221b; }
.name { flex: 1; padding-left: 16px; font-weight: 500; letter-spacing: -.35px; white-space: nowrap; line-height: 34px; }
.dot { width: 18px; height: 18px; border-radius: 50%; background: #363636; margin: -2px 20px 0 0; flex: none; }

/* timeline */
.timeline { flex: 1; }
.ruler { height: 72px; border-bottom: 2px solid #000; background: #333; }
.ruler text { font-size: 26px; fill: #cfcfcf; letter-spacing: .4px; }
.lane { height: 92px; border-bottom: 2px solid rgba(0, 0, 0, .3); background: #2d2d2d; }
.lane.green { background: #2c352c; }
.lane.blue { background: #2a2f37; border-color: #22262c; }
.lane.lit { background: #323b33; }
.lines { position: absolute; left: 0; top: 0; }
.tag { position: absolute; font-size: 21px; font-weight: 700; line-height: 30px; letter-spacing: 1.4px; }
.region { position: absolute; height: 90px; border: 2px solid #000; border-radius: 8px; overflow: hidden; font-size: 21px; font-weight: 500; line-height: 30px; letter-spacing: .45px; white-space: nowrap; }
.region span { display: block; padding: 4px 0 0 10px; height: 36px; }
.region svg { position: absolute; left: 0; top: 0; }
.region span { position: relative; }
```
FILE: app.js
```js
const TRACKS = [
  { n: 6, name: 'Marimba', icon: 'marimba', cls: 'child', lane: 'green' },
  { n: 7, name: 'Theraminish', icon: 'modular' },
  { n: 8, name: 'Sweet Lead', icon: 'synth' },
  { n: 9, name: 'PADS', icon: 'bus', fold: 'open', lane: 'green', tag: '#b5f5b3' },
  { n: 10, name: 'Drifting Away', icon: 'synth', cls: 'child first', lane: 'green' },
  { n: 11, name: 'Bass Pad', icon: 'synth', cls: 'child', lane: 'green' },
  { n: 12, name: 'RISERS', icon: 'bus', fold: 'open', lane: 'blue', tag: '#aecdf8' },
  { n: 13, name: 'Risers', icon: 'audio', cls: 'child first', lane: 'blue' },
  { n: 14, name: 'Laser Noi...Effect 06', icon: 'audio', cls: 'child', lane: 'blue' },
  { n: 15, name: 'ARPS', icon: 'bus', fold: 'open', lane: 'green', tag: '#b5f5b3' },
  { n: 16, name: 'Log Jam', icon: 'synth', cls: 'child first', lane: 'green' },
  { n: 17, name: 'Atmos Pad', icon: 'notes', cls: 'child picked', lane: 'green lit', armed: true },
  { n: 18, name: 'Violin Stac', icon: 'notes' },
  { n: 19, name: 'DRUMS', icon: 'drums', fold: 'closed' }
];

function art(t) {
  if (t.icon === 'drums') return '<svg class="pads" width="56" height="50"><use href="#drums"/></svg>';
  if (['bus', 'audio', 'notes'].includes(t.icon)) return `<div class="box ${t.icon}"><svg width="60" height="44"><use href="#${t.icon}"/></svg></div>`;
  return `<svg class="pic" width="60" height="92"><use href="#${t.icon}"/></svg>`;
}

function head(t) {
  const cls = t.fold ? 'folder ' + t.fold : (t.cls || '');
  const arrow = t.fold === 'open' ? 'M0 3H22L11 19Z' : 'M4 0 20 11 4 22Z';
  const lead = t.fold
    ? `<div class="fold"><svg class="arrow" width="22" height="22" viewBox="0 0 22 22"><path d="${arrow}" fill="#dedede"/></svg>${art(t)}</div>`
    : `<div class="art">${art(t)}</div>`;
  return `<div class="row ${cls}"><div class="num">${t.n}</div><div class="rule"></div><div class="body">${lead}
    <div class="msr"><span class="m">M</span><span class="s">S</span><span class="r${t.armed ? ' armed' : ''}">R</span></div>
    <div class="name">${t.name}</div><i class="dot"></i></div></div>`;
}
document.getElementById('heads').innerHTML = TRACKS.map(head).join('');

// Timeline positions: x of a 2px bar line, snapped to whole points
const barX = k => 2 * Math.round(564.7 + 46.29 * k) - 1119;

let ruler = '<path d="M0 35H1756" stroke="#222" stroke-width="2"/>';
let grid = '';
for (let k = 0; k <= 18; k++) {
  const x = barX(k);
  const major = k % 2 === 1;
  ruler += `<rect x="${x}" y="${major ? 6 : 42}" width="2" height="${major ? 64 : 28}" fill="#666"/>`;
  if (major) ruler += `<text x="${x + 7.5}" y="24">${62 + k}</text>`;
  for (let q = 1; q < 4; q++) {
    const sx = barX(k + q / 4);
    if (sx < 1754) ruler += `<rect x="${sx}" y="54" width="2" height="16" fill="#5c5c5c"/>`;
  }
  grid += `<rect x="${x}" y="0" width="2" height="1288" fill="#fff" fill-opacity=".13"/>`;
}
document.getElementById('ruler').innerHTML = ruler;

const rowTop = n => (n - 6) * 92;
const tags = TRACKS.filter(t => t.tag)
  .map(t => `<div class="tag" style="left:507px;top:${rowTop(t.n) + 32}px;color:${t.tag}">${t.name}</div>`).join('');

// Amplitude envelope of the audio region, one step per 3px
const env = [17, 15, 13, 11, 11, 9, 8, 7, 6, 6, 5, 5, 4, 3, 3, 2, 3, 2, 2, 2, 2, 2, 1.5, 2, 1.5, 2];
const wave = env.map((a, i) => `<rect x="${i * 3}" y="${60.5 - a}" width="3" height="${2 * a}"/>`).join('');

const REGIONS = [
  { n: 6, x: 565, w: 96, bg: '#4ca1a3', label: '', art: '<path d="M0 58H16M22 58H30M34 58H40M55 58H61M67 58H73" stroke="#c3f1f0" stroke-width="4"/>' },
  { n: 8, x: 565, w: 92, bg: '#4da15a', label: 'Solid B', fg: '#eefff0', art: '<path d="M10 58H90" stroke="#c2efcb" stroke-width="4"/><path d="M0 60H11" stroke="#c2efcb" stroke-width="4"/>' },
  { n: 13, x: 565, w: 164, bg: '#435ba8', label: 'Laser Noise E', fg: '#fff', art: `<path d="M0 37.5H21L1 80Z" fill="#fff" fill-opacity=".2"/><path d="M117 37.5H160V78Z" fill="#fff" fill-opacity=".25"/><g fill="#d5defc">${wave}<rect x="76" y="59.5" width="82" height="2"/></g><path d="M160 37.5H117L160 78" fill="none" stroke="#c3cdf0" stroke-width="2"/>` },
  { n: 17, x: 565, w: 96, bg: '#cafce2', label: 'Atmos', fg: '#2a6a49', art: '<path d="M2 36H90V78Q90 84 84 84H8Q2 84 2 78Z" fill="#4d9f70"/><path d="M2 43.5H76M2 47.5H74M2 60H74M2 76H76" stroke="#cafce2" stroke-width="4.2"/>' }
];
const regions = REGIONS.map(r => `<div class="region" style="left:${r.x}px;top:${rowTop(r.n)}px;width:${r.w}px;background:${r.bg};color:${r.fg || '#fff'}"><svg width="${r.w - 4}" height="86">${r.art}</svg><span>${r.label}</span></div>`).join('');

document.getElementById('lanes').innerHTML =
  TRACKS.map(t => `<div class="lane ${t.lane || ''}"></div>`).join('') +
  `<svg class="lines" width="1756" height="1288">${grid}</svg>` + tags + regions;

// Channel strip faders
const LONG = [3, 37, 71, 105, 141, 163, 191, 213, 237, 249, 271];
const SHORT = [13, 25, 49, 59, 83, 95, 117, 129, 145, 149, 153, 157, 169, 173, 177, 181, 187, 197, 203, 209, 219, 223, 229, 233, 243, 255, 261];
const SCALE = [[0, 3], [3, 21], [6, 39], [9, 57], [12, 75], [15, 93], [18, 111], [21, 129], [24, 147], [30, 171], [35, 191], [40, 211], [45, 231], [50, 251], [60, 271]];
document.querySelectorAll('.fader').forEach(f => {
  const cap = +f.dataset.cap;
  let s = LONG.map(y => `<rect x="8" y="${y - 1}" width="22" height="2" fill="${y === 71 ? '#fff' : '#999'}"/>`).join('');
  s += SHORT.map(y => `<rect x="22" y="${y - 1}" width="8" height="2" fill="#838383"/>`).join('');
  s += '<rect x="32" y="0" width="4" height="274" fill="#252525"/>';
  s += SCALE.map(([v, y]) => `<text x="81" y="${y + 5}" text-anchor="end" fill="#bdbdbd">${v}</text><rect x="84" y="${y - 1}" width="6" height="2" fill="#a0a0a0"/>`).join('');
  s += '<path d="M89 8V146" stroke="#8f8f8f" stroke-width="2" stroke-dasharray="2 4"/><path d="M89 150V271" stroke="#8f8f8f" stroke-width="2" stroke-dasharray="2 2"/>';
  s += '<rect x="90" y="0" width="20" height="274" fill="#2c2c28"/><rect x="92" y="2" width="16" height="18" fill="#3b322b"/><rect x="92" y="20" width="16" height="62" fill="#3a372b"/><rect x="92" y="82" width="16" height="190" fill="#323935"/>';
  s += `<g transform="translate(17 ${cap})"><rect x="1" y="5" width="33" height="70" rx="2" fill="#000" opacity=".35"/><rect width="35" height="71" rx="2" fill="url(#capfill)"/>
    <path d="M0 10.5H35M0 61H35" stroke="#d8dadc" stroke-width="1.4"/><path d="M0 16H35M0 21H35M0 26H35M0 31H35" stroke="#787878"/><path d="M0 36H35" stroke="#222" stroke-width="2"/><path d="M0 42H35M0 47H35M0 52H35M0 57H35" stroke="#8c8c8c"/></g>`;
  f.innerHTML = `<defs><linearGradient id="capfill" x1="0" y1="0" x2="0" y2="1"><stop offset="0" stop-color="#aeaeae"/><stop offset=".14" stop-color="#c2c2c2"/><stop offset=".15" stop-color="#7e7e7e"/><stop offset=".5" stop-color="#a2a2a2"/><stop offset=".52" stop-color="#a8a8a8"/><stop offset=".85" stop-color="#c3c7ca"/><stop offset=".86" stop-color="#8e8e8e"/><stop offset="1" stop-color="#787878"/></linearGradient></defs>` + s;
});
```
